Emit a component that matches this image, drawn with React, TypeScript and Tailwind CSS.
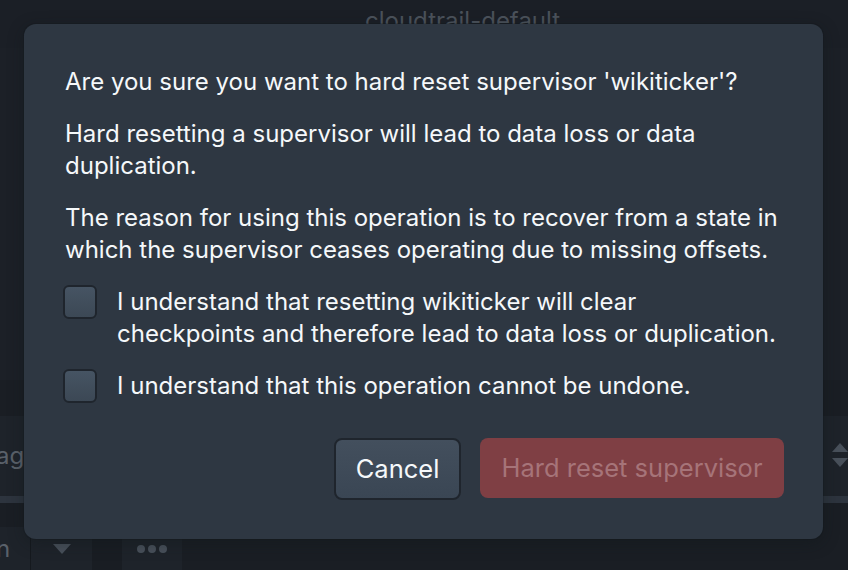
import React from "react";

const font = { fontFamily: "Inter, 'Noto Sans', sans-serif" };

function Checkbox({ children }: { children: React.ReactNode }) {
  return (
    <label className="ml-[-2px] flex items-start gap-[20px]">
      <span className="mt-[-1px] block h-[34px] w-[34px] shrink-0 rounded-[6px] border-2 border-[#1f252d] bg-gradient-to-b from-[#465463] to-[#3c4855]" />
      <span>{children}</span>
    </label>
  );
}

export default function App() {
  return (
    <div className="relative h-[570px] w-[848px] overflow-hidden bg-[#1b1f26]" style={font}>
      {/* background page (behind overlay) */}
      <div className="flex h-full flex-col">
        <div className="flex h-[48px] items-start bg-[#1b1f26] pl-[365px] pt-[6px] text-[24px] leading-[30px] text-[#4b525b]">
          cloudtrail-default
        </div>
        <div className="h-[332px] bg-[#1c2027]" />
        <div className="h-[36px] bg-[#1a1e24]" />
        <div className="flex h-[80px] items-center justify-between bg-[#1e232a]">
          <span className="ml-[-4px] text-[24px] text-[#5a616a]">age</span>
          <svg width="16" height="26" viewBox="0 0 16 26">
            <path d="M8 0 L16 9 L0 9 Z" fill="#48505a" />
            <path d="M0 15 L16 15 L8 24 Z" fill="#48505a" />
          </svg>
        </div>
        <div className="h-[7px] bg-[#2d343e]" />
        <div className="h-[24px] bg-[#1a1e24]" />
        <div className="flex h-[43px] bg-[#1a1e24]">
          <div className="flex w-[31px] items-center border-r border-[#15191e] bg-[#1e232a] text-[24px] text-[#5a616a]">
            <span className="ml-[-4px]">n</span>
          </div>
          <div className="flex w-[61px] items-center justify-center bg-[#1e232a]">
            <svg width="18" height="10" viewBox="0 0 18 10">
              <path d="M0 0 L18 0 L9 10 Z" fill="#48505a" />
            </svg>
          </div>
          <div className="w-[30px] bg-[#191d23]" />
          <div className="flex w-[60px] items-center justify-center gap-[3px] bg-[#1e232a]">
            <span className="block h-[8px] w-[8px] rounded-full bg-[#48505a]" />
            <span className="block h-[8px] w-[8px] rounded-full bg-[#48505a]" />
            <span className="block h-[8px] w-[8px] rounded-full bg-[#48505a]" />
          </div>
        </div>
      </div>

      {/* dialog */}
      <div className="absolute left-[24px] top-[24px] flex h-[515px] w-[799px] flex-col rounded-[12px] bg-[#2e3742] pl-[41px] pr-[39px] pt-[42px] text-[24px] leading-[32px] text-[#f5f8fa] shadow-[0_0_0_1px_rgba(16,22,26,0.2),0_4px_16px_rgba(16,22,26,0.4)]">
        <div className="flex flex-col gap-[20px] pr-0">
          <p className="whitespace-nowrap">Are you sure you want to hard reset supervisor 'wikiticker'?</p>
          <p>
            Hard resetting a supervisor will lead to data loss or data
            <br />
            duplication.
          </p>
          <p className="whitespace-nowrap">
            The reason for using this operation is to recover from a state in
            <br />
            which the supervisor ceases operating due to missing offsets.
          </p>
          <Checkbox>
            <span className="whitespace-nowrap">
              I understand that resetting wikiticker will clear
              <br />
              checkpoints and therefore lead to data loss or duplication.
            </span>
          </Checkbox>
          <Checkbox>I understand that this operation cannot be undone.</Checkbox>
        </div>
        <div className="mt-[35px] flex justify-end gap-[19px]">
          <button className="h-[62px] w-[127px] rounded-[8px] border-2 border-[#1f252d] bg-gradient-to-b from-[#434f5d] to-[#3a4654] text-[25.5px] text-[#f5f8fa]">
            Cancel
          </button>
          <button className="h-[60px] w-[304px] rounded-[8px] bg-[#7f3f44] text-[25.5px] text-[#a67479]">
            Hard reset supervisor
          </button>
        </div>
      </div>
    </div>
  );
}
